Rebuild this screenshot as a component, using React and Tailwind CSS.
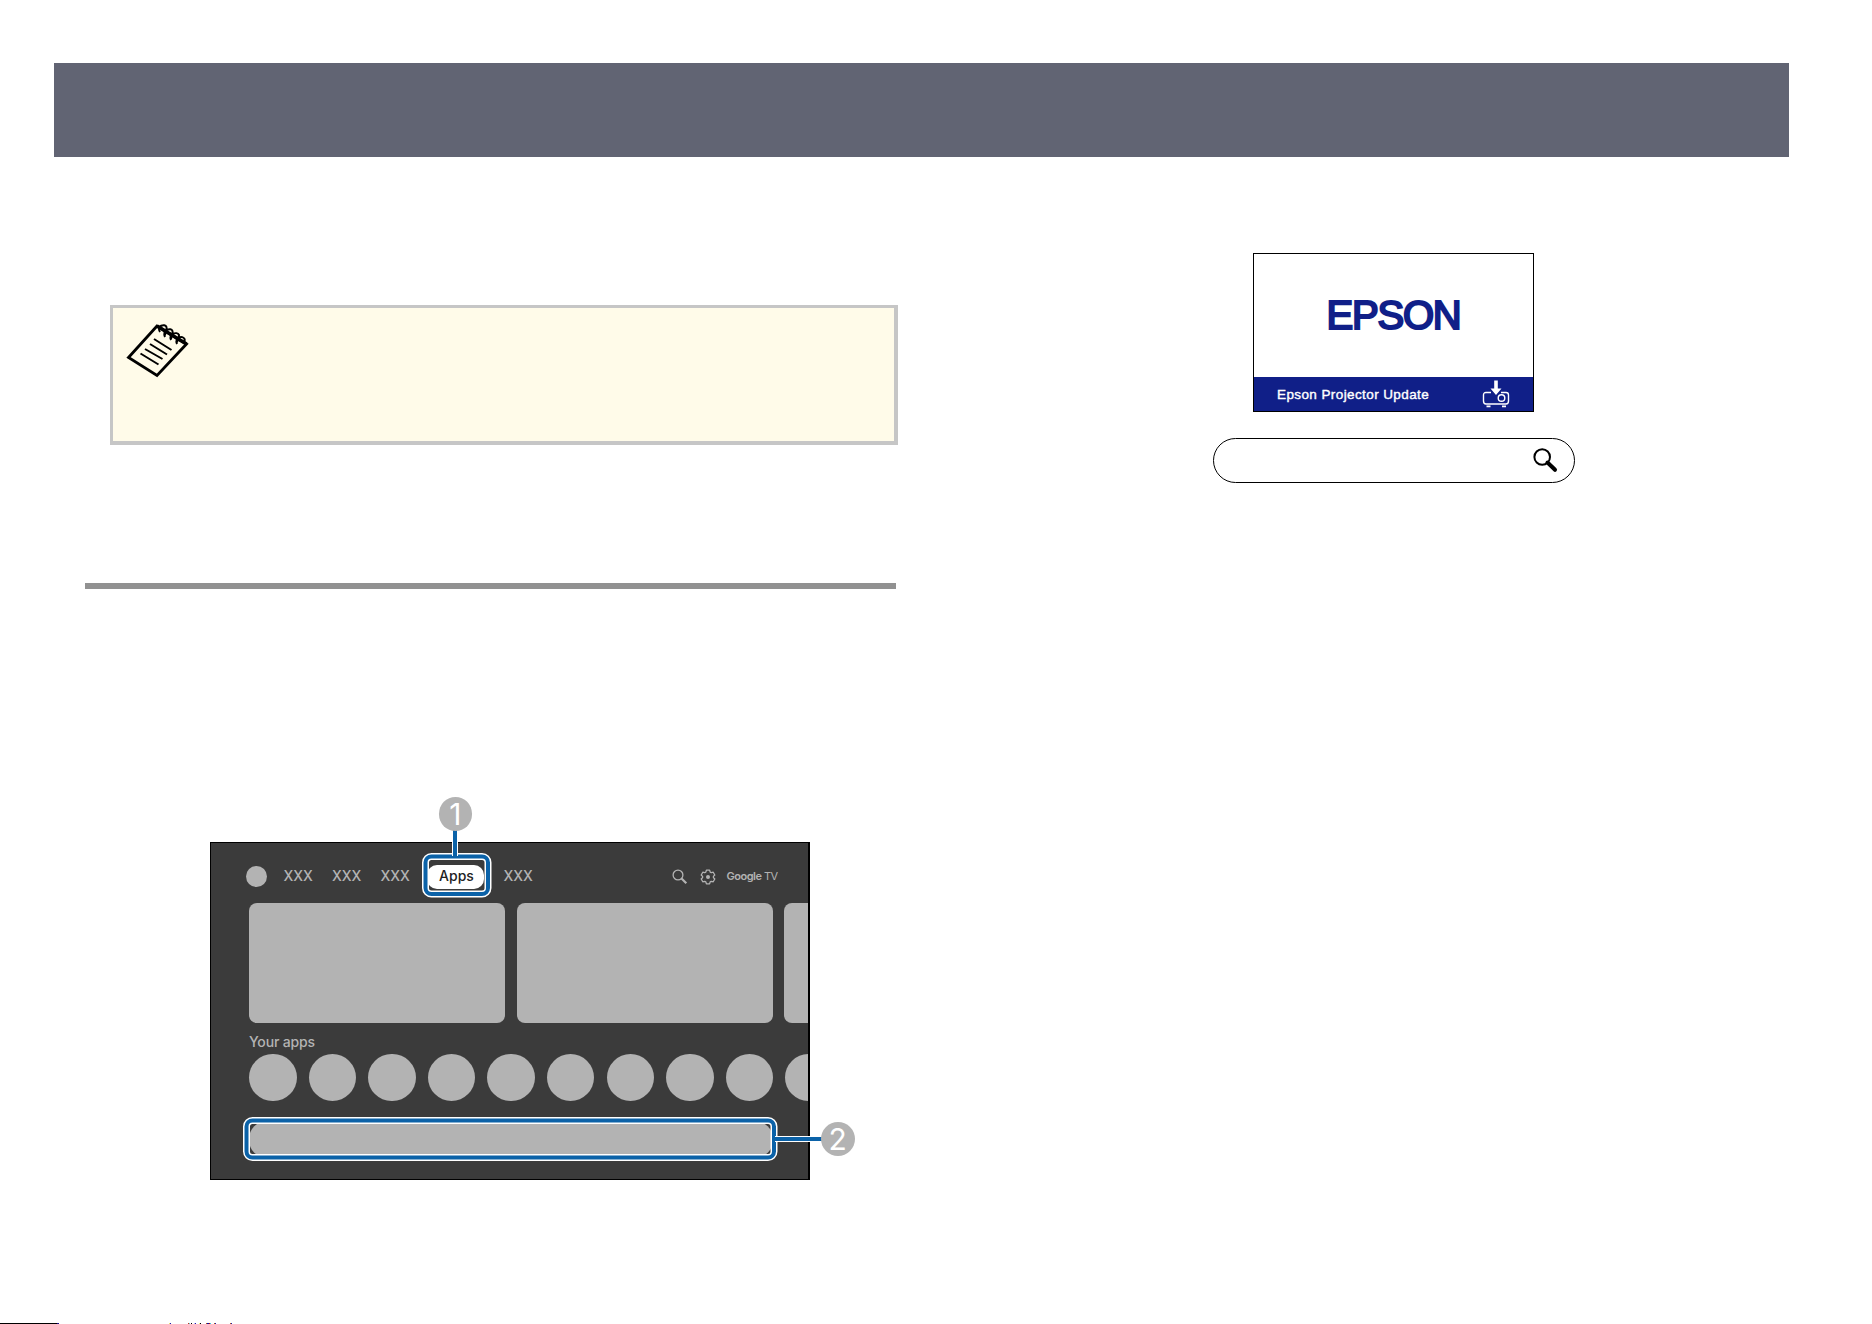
import React from "react";

const APP_COUNT = 10;

// Marks along the bottom edge: [gap before, width, colour class]
const EDGE_MARKS = [
  [0, 57, "bg-black"],
  [0, 2, "bg-[#20108a]"],
  [110, 1, "bg-[#e8e070]"],
  [0, 1, "bg-[#2020b0]"],
  [17, 1, "bg-[#c03020]"],
  [0, 1, "bg-[#60d0d0]"],
  [1, 1, "bg-black"],
  [2, 1, "bg-[#c0b8f0]"],
  [0, 1, "bg-[#2020b0]"],
  [3, 1, "bg-[#f0f080]"],
  [0, 1, "bg-black"],
  [5, 1, "bg-[#b06020]"],
  [0, 2, "bg-[#1010a0]"],
  [0, 1, "bg-[#b01010]"],
  [0, 1, "bg-[#40c0e0]"],
  [3, 1, "bg-[#b06020]"],
  [0, 1, "bg-[#2020b0]"],
  [14, 1, "bg-[#b06020]"],
  [0, 1, "bg-[#2020b0]"],
];

function NoteIcon() {
  return (
    <svg width="64" height="56" viewBox="0 0 64 56" fill="none" stroke="#000">
      <path d="M31 4 L2.5 35.5 L31 53.5 L60.5 22 Z" fill="#fffbe9" strokeWidth="2.8" />
      <path d="M28 17 L45.5 28 M24 22 L41 32.5 M19 27 L36.5 37 M14.5 31.5 L32.5 42.5" strokeWidth="2" />
      <path
        d="M34 10 C30 4 39 1 40.5 5 C41 7 40 9 39 13 M39 15 C36 8 45 5 46.5 9 C47 11 46 12 45 17 M45 18 C42 12 51 9 53 13 C53 15 52 17 51 20 M51 22 C48 15 57 13 58.5 17 C59 18 58 20 57 21"
        strokeWidth="2"
      />
      <path d="M31 4 L60.5 22" strokeWidth="3.6" />
    </svg>
  );
}

function ProjectorUpdateIcon() {
  return (
    <svg width="28" height="28" viewBox="0 0 28 28" fill="none" stroke="#fff" strokeWidth="1.4">
      <path d="M9 12.5 H4 Q1.5 12.5 1.5 15 V21 Q1.5 24 4 24 H24 Q26.5 24 26.5 21 V15 Q26.5 12.5 24 12.5 H19" />
      <circle cx="19.5" cy="18" r="3.3" />
      <path d="M12.2 0.5 H15.8 V8.5 H19.5 L14 15 L8.5 8.5 H12.2 Z" fill="#fff" stroke="none" />
      <path d="M4.5 26.3 H8.5 M20 26.3 H24" strokeWidth="1.8" />
    </svg>
  );
}

function GearIcon() {
  return (
    <svg width="16" height="16" viewBox="0 0 16 16" fill="none" stroke="#b3b3b3">
      <path
        d="M6.4 1.2 H9.6 L10.2 3.1 L11.3 3.7 L13.2 3.2 L14.8 6 L13.4 7.4 V8.6 L14.8 10 L13.2 12.8 L11.3 12.3 L10.2 12.9 L9.6 14.8 H6.4 L5.8 12.9 L4.7 12.3 L2.8 12.8 L1.2 10 L2.6 8.6 V7.4 L1.2 6 L2.8 3.2 L4.7 3.7 L5.8 3.1 Z"
        strokeWidth="1.3"
        strokeLinejoin="round"
      />
      <circle cx="8" cy="8" r="2" fill="#b3b3b3" stroke="none" />
    </svg>
  );
}

// Blue rounded frame with thin white edges, drawn over the screen
function Frame({ width, height, className }) {
  return (
    <svg className={`absolute ${className}`} width={width} height={height} fill="none">
      <rect x="3.5" y="3.5" width={width - 7} height={height - 7} rx="6" stroke="#fff" strokeWidth="7" />
      <rect x="3.5" y="3.5" width={width - 7} height={height - 7} rx="6" stroke="#0b62a8" strokeWidth="4" />
    </svg>
  );
}

function Badge({ label, className }) {
  return (
    <div
      className={`absolute flex size-[33.5px] items-center justify-center rounded-full bg-[#b3b3b3] font-[Inter] text-[30px] leading-none text-white ${className}`}
    >
      {label}
    </div>
  );
}

function TvScreen() {
  return (
    <div className="relative ml-[125px] mt-[253px] h-[338px] w-[600px]">
      <div className="h-full overflow-hidden border border-r-2 border-black bg-[#3b3b3b] pl-[38px] font-[Inter] text-[#b3b3b3]">
        <div className="flex h-[60px] items-center pt-[8px] text-[14px] font-medium leading-none">
          <span className="-ml-[3px] mt-[-1px] size-[21px] rounded-full bg-[#b3b3b3]" />
          <span className="ml-[16.5px] mt-[-3px] w-[48.5px]">XXX</span>
          <span className="mt-[-3px] w-[48.5px]">XXX</span>
          <span className="mt-[-3px] w-[46.5px]">XXX</span>
          <span className="mt-[-1px] flex h-[24px] w-[57px] items-center justify-center rounded-[10px] bg-white pb-px pl-[2px] text-[#222]">
            Apps
          </span>
          <span className="ml-[19.5px] mt-[-3px] w-[168.5px]">XXX</span>
          <svg width="16" height="16" viewBox="0 0 16 16" fill="none" stroke="#b3b3b3">
            <circle cx="6" cy="6" r="4.9" strokeWidth="1.3" />
            <path d="M9.5 9.5 L14.3 14.3" strokeWidth="2.2" />
          </svg>
          <span className="ml-[12px]">
            <GearIcon />
          </span>
          <span className="ml-[10.5px] mt-[-2px] whitespace-nowrap text-[11px] font-normal tracking-[-0.5px]">
            <span className="font-semibold">Google</span> TV
          </span>
        </div>
        <div className="flex gap-[11.7px]">
          <div className="h-[120px] w-[256px] shrink-0 rounded-lg bg-[#b3b3b3]" />
          <div className="h-[120px] w-[256px] shrink-0 rounded-lg bg-[#b3b3b3]" />
          <div className="h-[120px] w-[256px] shrink-0 rounded-lg bg-[#b3b3b3]" />
        </div>
        <div className="h-[30.5px] pt-[9.5px] text-[14px] font-medium leading-[18px] tracking-[-0.15px]">
          Your apps
        </div>
        <div className="flex gap-[12.1px]">
          {Array.from({ length: APP_COUNT }, (_, i) => (
            <div key={i} className="size-[47.5px] shrink-0 rounded-full bg-[#b3b3b3]" />
          ))}
        </div>
        <div className="mt-[19.5px] h-[37px] w-[524px] rounded-[18px] bg-[#b3b3b3]" />
      </div>

      {/* Callouts */}
      <Frame width={69.5} height={44.5} className="left-[212px] top-[11px]" />
      <div className="absolute left-[242px] top-[-14px] h-[28px] w-[6px] border-x border-white bg-[#0b62a8]" />
      <Badge label="1" className="left-[228.5px] top-[-45px]" />
      <Frame width={534.5} height={44} className="left-[33px] top-[275px]" />
      <div className="absolute left-[565px] top-[294px] h-[6px] w-[50px] border-y border-white bg-[#0b62a8]" />
      <Badge label="2" className="left-[611px] top-[280px]" />
    </div>
  );
}

export default function App() {
  return (
    <div className="flex h-[1324px] w-[1872px] flex-col overflow-hidden bg-white">
      <header className="ml-[54px] mt-[63px] h-[94px] w-[1735px] shrink-0 bg-[#616473]" />

      <main className="flex flex-1 pl-[85px]">
        <section className="w-[813px] pt-[148px]">
          <div className="ml-[25px] h-[140px] w-[788px] border-b-4 border-l-[3px] border-r-4 border-t-[3px] border-[#c6c6c6] bg-[#fffbe9] pl-[13px] pt-[14px]">
            <NoteIcon />
          </div>
          <div className="mt-[138px] h-[6px] w-[811px] bg-[#919191]" />
          <TvScreen />
        </section>

        <section className="ml-[314px] flex w-[363px] flex-col items-center pt-[96px]">
          <div className="flex h-[159px] w-[281px] flex-col border border-black font-['Liberation_Sans']">
            <div className="flex flex-1 items-center justify-center pb-[2px] text-[40px] leading-none tracking-[-1.2px] text-[#101f88] [-webkit-text-stroke:2.2px_#101f88]">
              EPSON
            </div>
            <div className="flex h-[34px] items-center justify-between bg-[#101f88] pl-[23px] pr-[23px] text-[13.5px] text-white">
              <span className="pt-[3px] tracking-[0.4px] [-webkit-text-stroke:0.4px_white]">Epson Projector Update</span>
              <ProjectorUpdateIcon />
            </div>
          </div>
          <div className="mt-[26px] flex h-[45px] w-[362px] items-center justify-end rounded-full border border-black pb-px pr-[16px]">
            <svg width="26" height="26" viewBox="0 0 26 26" fill="none" stroke="#000">
              <circle cx="10.2" cy="10" r="7.8" strokeWidth="2" />
              <path d="M15.5 15.5 L23 22.8" strokeWidth="4" strokeLinecap="round" />
            </svg>
          </div>
        </section>
      </main>

      <div className="flex h-px shrink-0">
        {EDGE_MARKS.map(([gap, width, color], i) => (
          <span key={i} className={`h-px ${color}`} style={{ marginLeft: gap, width }} />
        ))}
      </div>
    </div>
  );
}
